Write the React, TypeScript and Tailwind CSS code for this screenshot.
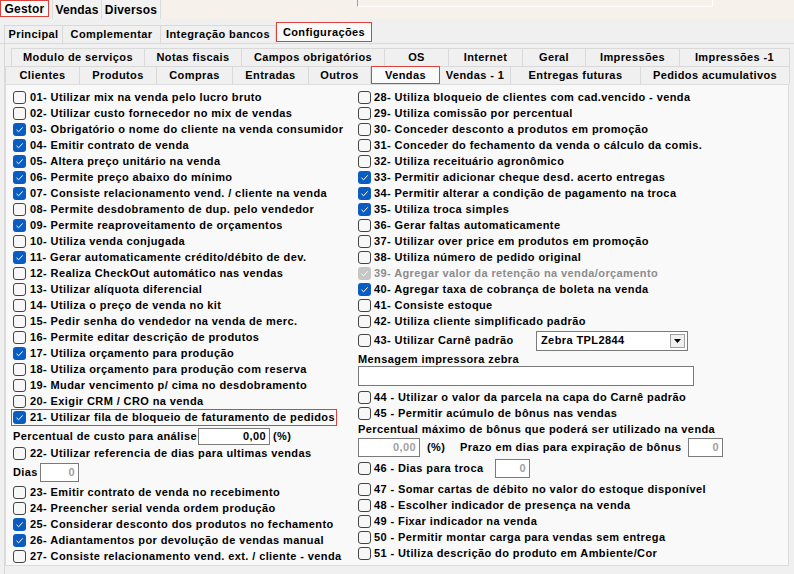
import React from "react";

type Opt = { label: string; checked?: boolean; disabled?: boolean };

const leftTop: Opt[] = [
  { label: "01- Utilizar mix na venda pelo lucro bruto" },
  { label: "02- Utilizar custo fornecedor no mix de vendas" },
  { label: "03- Obrigatório o nome do cliente na venda consumidor", checked: true },
  { label: "04- Emitir contrato de venda", checked: true },
  { label: "05- Altera preço unitário na venda", checked: true },
  { label: "06- Permite preço abaixo do mínimo", checked: true },
  { label: "07- Consiste relacionamento vend. / cliente na venda", checked: true },
  { label: "08- Permite desdobramento de dup. pelo vendedor" },
  { label: "09- Permite reaproveitamento de orçamentos", checked: true },
  { label: "10- Utiliza venda conjugada" },
  { label: "11- Gerar automaticamente crédito/débito de dev.", checked: true },
  { label: "12- Realiza CheckOut automático nas vendas" },
  { label: "13- Utilizar alíquota diferencial" },
  { label: "14- Utiliza o preço de venda no kit" },
  { label: "15- Pedir senha do vendedor na venda de merc." },
  { label: "16- Permite editar descrição de produtos" },
  { label: "17- Utiliza orçamento para produção", checked: true },
  { label: "18- Utiliza orçamento para produção com reserva" },
  { label: "19- Mudar vencimento p/ cima no desdobramento" },
  { label: "20- Exigir CRM / CRO na venda" },
];

const leftBottom: Opt[] = [
  { label: "23- Emitir contrato de venda no recebimento" },
  { label: "24- Preencher serial venda ordem produção" },
  { label: "25- Considerar desconto dos produtos no fechamento", checked: true },
  { label: "26- Adiantamentos por devolução de vendas manual", checked: true },
  { label: "27- Consiste relacionamento vend. ext. / cliente - venda" },
];

const rightTop: Opt[] = [
  { label: "28- Utiliza bloqueio de clientes com cad.vencido - venda" },
  { label: "29- Utiliza comissão por percentual" },
  { label: "30- Conceder desconto a produtos em promoção" },
  { label: "31- Conceder do fechamento da venda o cálculo da comis." },
  { label: "32- Utiliza receituário agronômico" },
  { label: "33- Permitir adicionar cheque desd. acerto entregas", checked: true },
  { label: "34- Permitir alterar a condição de pagamento na troca", checked: true },
  { label: "35- Utiliza troca simples", checked: true },
  { label: "36- Gerar faltas automaticamente" },
  { label: "37- Utilizar over price em produtos em promoção" },
  { label: "38- Utiliza número de pedido original" },
  { label: "39- Agregar valor da retenção na venda/orçamento", checked: true, disabled: true },
  { label: "40- Agregar taxa de cobrança de boleta na venda", checked: true },
  { label: "41- Consiste estoque" },
  { label: "42- Utiliza cliente simplificado padrão" },
];

const rightBottom: Opt[] = [
  { label: "47 - Somar cartas de débito no valor do estoque disponível" },
  { label: "48 - Escolher indicador de presença na venda" },
  { label: "49 - Fixar indicador na venda" },
  { label: "50 - Permitir montar carga para vendas sem entrega" },
  { label: "51 - Utiliza descrição do produto em Ambiente/Cor" },
];

const Box = ({ checked, disabled }: { checked?: boolean; disabled?: boolean }) => {
  if (checked) {
    return (
      <span
        className={[
          "w-[13px] h-[13px] rounded-[3px] flex items-center justify-center shrink-0",
          disabled ? "bg-[#c6c6c6]" : "bg-[#0b5cc0]",
        ].join(" ")}
      >
        <svg width="9" height="9" viewBox="0 0 9 9">
          <polyline points="1.5,4.8 3.6,6.8 7.6,2.4" fill="none" stroke="#ffffff" strokeWidth="1" />
        </svg>
      </span>
    );
  }
  return <span className="w-[13px] h-[13px] rounded-[3px] border border-[#444] bg-[#f7f7f7] shrink-0" />;
};

const Row = ({ o, gap = "gap-[4px]" }: { o: Opt; gap?: string }) => (
  <div className={["flex items-center h-[16px]", gap].join(" ")}>
    <Box checked={o.checked} disabled={o.disabled} />
    <span className={o.disabled ? "text-[#8c8c8c]" : "text-black"}>{o.label}</span>
  </div>
);

const Tab = ({ w, label, active }: { w: string; label: string; active?: boolean }) => (
  <div
    className={[
      "h-full flex items-center justify-center border-t border-r border-[#d9d9d9] shrink-0",
      w,
      active ? "bg-[#fafafa]" : "",
    ].join(" ")}
  >
    {label}
  </div>
);

const NumInput = ({ w, value, dim }: { w: string; value: string; dim?: boolean }) => (
  <div
    className={[
      "h-full border border-[#7a7a7a] bg-white flex items-center justify-end pr-[3px]",
      w,
      dim ? "text-[#a0a0a0]" : "text-black",
    ].join(" ")}
  >
    {value}
  </div>
);

export default function App() {
  return (
    <div
      className="w-[794px] h-[574px] overflow-hidden bg-[#f0f0f0] text-[11px] font-bold tracking-[0.4px] text-black leading-none"
      style={{ fontFamily: '"Liberation Sans", Arial, sans-serif' }}
    >
      {/* top tabs */}
      <div className="h-[19px] bg-[#f6f1eb] flex items-start relative">
        <div className="w-[49px] h-[17px] border border-[#e0403a] bg-[#fbfbfb] flex items-center justify-center text-[12px] tracking-[0.2px]">
          Gestor
        </div>
        <div className="ml-[3px] w-[50px] h-[19px] border-x border-[#dcdcdc] bg-[#f2f2f2] flex items-center justify-center text-[12px] tracking-[0.2px]">
          Vendas
        </div>
        <div className="w-[59px] h-[19px] border-r border-[#dcdcdc] bg-[#f2f2f2] flex items-center justify-center text-[12px] tracking-[0.2px]">
          Diversos
        </div>
        <div className="absolute left-[357px] top-0 w-[356px] h-[7px] border-l border-[#a0a0a0] border-b border-r border-b-white border-r-white" />
      </div>

      {/* second tab row */}
      <div className="h-[25px] flex items-end pl-[4px] border-b border-[#d9d9d9]">
        <div className="h-[18px] flex border-l border-[#d9d9d9]">
          <Tab w="w-[58px]" label="Principal" />
          <Tab w="w-[98px]" label="Complementar" />
          <Tab w="w-[115px]" label="Integração bancos" />
        </div>
        <div className="w-[96px] h-[20px] mb-[1px] border border-[#e0403a] bg-[#fafafa] flex items-center justify-center">
          Configurações
        </div>
      </div>

      {/* inner panel */}
      <div className="ml-[4px] h-[530px] border-l border-[#d9d9d9] flex flex-col">
        <div className="h-[4px]" />
        <div className="h-[18px] flex pl-[6px]">
          <div className="flex h-full border-l border-[#d9d9d9]">
            <Tab w="w-[133px]" label="Modulo de serviços" />
            <Tab w="w-[97px]" label="Notas fiscais" />
            <Tab w="w-[143px]" label="Campos obrigatórios" />
            <Tab w="w-[64px]" label="OS" />
            <Tab w="w-[74px]" label="Internet" />
            <Tab w="w-[63px]" label="Geral" />
            <Tab w="w-[94px]" label="Impressões" />
            <Tab w="w-[110px]" label="Impressões -1" />
          </div>
        </div>
        <div className="h-[18px] flex">
          <div className="flex h-full border-l border-[#d9d9d9]">
            <Tab w="w-[74px]" label="Clientes" />
            <Tab w="w-[77px]" label="Produtos" />
            <Tab w="w-[76px]" label="Compras" />
            <Tab w="w-[76px]" label="Entradas" />
            <Tab w="w-[62px]" label="Outros" />
          </div>
          <div className="w-[69px] h-full border border-[#e0403a] bg-[#fafafa] flex items-center justify-center">
            Vendas
          </div>
          <div className="flex h-full">
            <Tab w="w-[71px]" label="Vendas - 1" />
            <Tab w="w-[130px]" label="Entregas futuras" />
            <Tab w="w-[149px]" label="Pedidos acumulativos" />
          </div>
        </div>

        {/* content */}
        <div className="w-[784px] h-[482px] bg-[#f9f9f9] border border-[#dcdcdc] flex pt-[4px]">
          {/* left column */}
          <div className="w-[338px] pl-[7px] flex flex-col">
            {leftTop.map((o) => (
              <Row key={o.label} o={o} />
            ))}
            <div className="-ml-[2px] w-[326px] h-[17px] border border-[#e0403a] flex items-center gap-[4px] pl-[1px]">
              <Box checked />
              <span>21- Utilizar fila de bloqueio de faturamento de pedidos</span>
            </div>
            <div className="h-[19px] flex items-center pt-[2px]">
              <span className="w-[185px]">Percentual de custo para análise</span>
              <div className="h-[17px] flex items-center">
                <NumInput w="w-[72px]" value="0,00" />
              </div>
              <span className="ml-[3px]">(%)</span>
            </div>
            <Row o={{ label: "22- Utilizar referencia de dias para ultimas vendas" }} />
            <div className="h-[23px] flex items-center">
              <span className="w-[27px]">Dias</span>
              <div className="h-[19px] flex items-center">
                <NumInput w="w-[39px]" value="0" dim />
              </div>
            </div>
            {leftBottom.map((o) => (
              <Row key={o.label} o={o} />
            ))}
          </div>

          {/* right column */}
          <div className="flex-1 pl-[14px] flex flex-col">
            {rightTop.map((o) => (
              <Row key={o.label} o={o} gap="gap-[3px]" />
            ))}
            <div className="h-[23px] flex items-center gap-[3px]">
              <Box />
              <span className="w-[159px]">43- Utilizar Carnê padrão</span>
              <div className="w-[152px] h-[20px] border border-[#7a7a7a] bg-white flex items-center justify-between pl-[4px] pr-[2px]">
                <span>Zebra TPL2844</span>
                <span className="w-[15px] h-[14px] border border-[#a0a0a0] bg-[#f0f0f0] flex items-center justify-center">
                  <svg width="7" height="4" viewBox="0 0 7 4">
                    <polygon points="0,0 7,0 3.5,4" fill="#000" />
                  </svg>
                </span>
              </div>
            </div>
            <div className="h-[14px] flex items-center">Mensagem impressora zebra</div>
            <div className="w-[336px] h-[20px] border border-[#7a7a7a] bg-white" />
            <div className="h-[3px]" />
            <Row o={{ label: "44 - Utilizar o valor da parcela na capa do Carnê padrão" }} gap="gap-[3px]" />
            <Row o={{ label: "45 - Permitir acúmulo de bônus nas vendas" }} gap="gap-[3px]" />
            <div className="h-[16px] flex items-center">Percentual máximo de bônus que poderá ser utilizado na venda</div>
            <div className="h-[21px] flex items-center">
              <div className="h-[19px] flex">
                <NumInput w="w-[62px]" value="0,00" dim />
              </div>
              <span className="w-[40px] pl-[7px]">(%)</span>
              <span className="w-[228px]">Prazo em dias para expiração de bônus</span>
              <div className="h-[19px] flex">
                <NumInput w="w-[35px]" value="0" dim />
              </div>
            </div>
            <div className="h-[20px] flex items-center gap-[3px]">
              <Box />
              <span className="w-[118px]">46 - Dias para troca</span>
              <div className="h-[19px] flex">
                <NumInput w="w-[35px]" value="0" dim />
              </div>
            </div>
            <div className="h-[3px]" />
            {rightBottom.map((o) => (
              <Row key={o.label} o={o} gap="gap-[3px]" />
            ))}
          </div>
        </div>
      </div>
    </div>
  );
}
